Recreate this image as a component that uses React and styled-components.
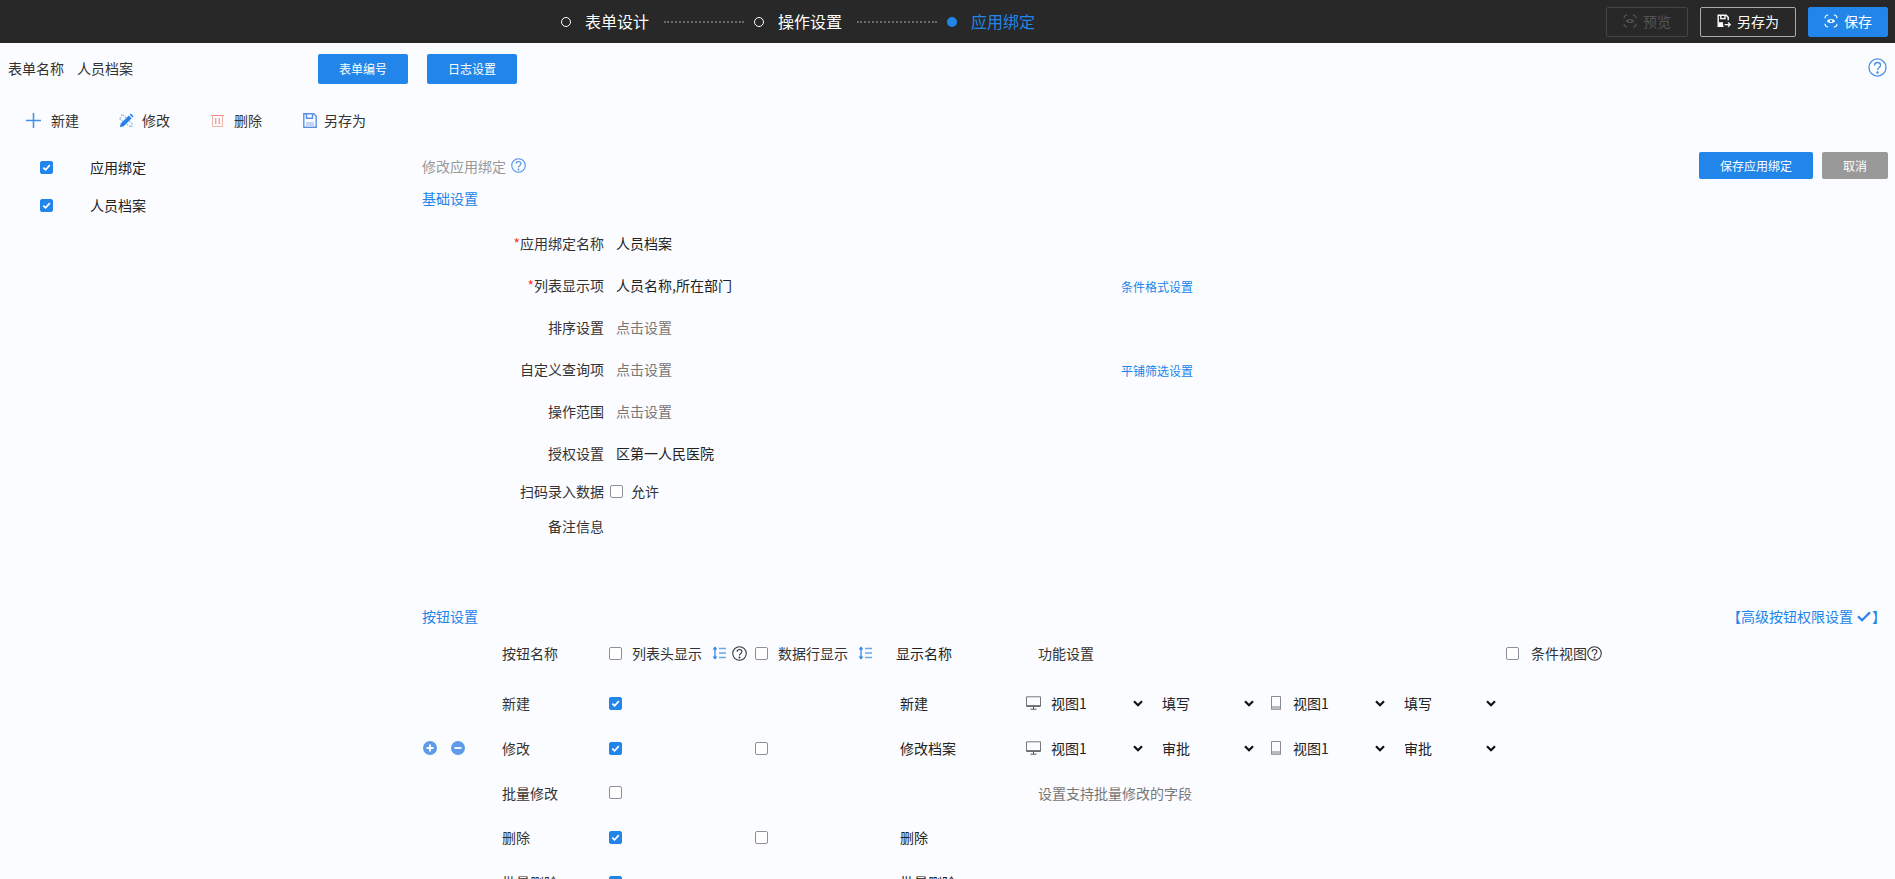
import React from "react";
import styled, { createGlobalStyle } from "styled-components";

const BLUE = "#2185e9";

const Global = createGlobalStyle`
  html, body { margin: 0; padding: 0; height: 100%; overflow: hidden; background: #fbfcff; }
  body { font-family: "Noto Sans CJK SC", "Noto Sans", sans-serif; font-size: 14px; color: #333; }
  * { box-sizing: border-box; }
`;

const Page = styled.div`
  height: 100vh;
  overflow: hidden;
  display: flex;
  flex-direction: column;
`;

const TopBar = styled.header`
  flex: none;
  height: 43px;
  background: #282828;
  display: flex;
  align-items: center;
  padding: 0 7px 0 561px;
`;
const Steps = styled.div`
  display: flex;
  align-items: center;
`;
const StepDot = styled.span`
  width: 10px;
  height: 10px;
  border-radius: 50%;
  border: ${(p) => (p.$active ? "none" : "1.5px solid #fff")};
  background: ${(p) => (p.$active ? BLUE : "transparent")};
  margin-right: 14px;
`;
const StepText = styled.span`
  font-size: 16px;
  line-height: 24px;
  margin-bottom: 2px;
  color: ${(p) => (p.$active ? BLUE : "#fff")};
`;
const StepLine = styled.span`
  width: 80px;
  border-top: 2px dotted #6a6a6a;
  margin: 1px 10px 0 15px;
`;
const TopActions = styled.div`
  margin-left: auto;
  display: flex;
  gap: 12px;
`;
const TopButton = styled.button`
  width: ${(p) => p.$w}px;
  height: 30px;
  display: flex;
  align-items: center;
  justify-content: center;
  gap: 6px;
  padding: 0 0 1px;
  border-radius: 2px;
  font: inherit;
  font-size: 14px;
  color: ${(p) => (p.$variant === "disabled" ? "#555" : "#fff")};
  background: ${(p) => (p.$variant === "primary" ? BLUE : "transparent")};
  border: 1px solid
    ${(p) =>
      p.$variant === "primary" ? BLUE : p.$variant === "disabled" ? "#444" : "#aaa"};
`;

const FormBar = styled.div`
  flex: none;
  height: 30px;
  margin-top: 11px;
  padding: 0 8px;
  display: flex;
  align-items: center;
`;
const FormName = styled.span`
  font-size: 14px;
  line-height: 20px;
  color: #333;
  margin: 0 ${(p) => p.$mr || 0}px 2px 0;
`;
const BlueButton = styled.button`
  width: ${(p) => p.$w}px;
  height: ${(p) => p.$h}px;
  padding: 0 0 1px;
  border: none;
  border-radius: 2px;
  background: ${(p) => (p.$grey ? "#999" : BLUE)};
  color: #fff;
  font: inherit;
  font-size: 12px;
  margin-right: ${(p) => p.$mr || 0}px;
`;
const HelpCorner = styled.span`
  margin-left: auto;
  margin-top: -3px;
  display: flex;
`;

const Toolbar = styled.div`
  flex: none;
  height: 28px;
  margin-top: 22px;
  padding-left: 26px;
  display: flex;
  align-items: center;
  gap: 40px;
`;
const ToolItem = styled.span`
  display: flex;
  align-items: center;
  gap: ${(p) => p.$gap}px;
  font-size: 14px;
  color: #333;
`;
const ToolIcon = styled.span`
  width: 15px;
  height: 15px;
  display: flex;
  align-items: center;
  justify-content: center;
`;

const Body = styled.div`
  flex: 1;
  display: grid;
  grid-template-columns: 422px 1fr;
  min-height: 0;
`;
const SideList = styled.div`
  padding: 14px 0 0 40px;
`;
const SideRow = styled.div`
  height: 38px;
  display: flex;
  align-items: center;
  gap: 37px;
  font-size: 14px;
  color: #222;
`;

const Box = styled.span`
  flex: none;
  width: 13px;
  height: 13px;
  border-radius: 2px;
  display: inline-flex;
  align-items: center;
  justify-content: center;
  background: ${(p) => (p.$on ? BLUE : "#fff")};
  border: 1px solid ${(p) => (p.$on ? BLUE : "#8f8f99")};
`;

const Panel = styled.div`
  padding: 18px 7px 0 0;
  min-width: 0;
`;
const PanelHead = styled.div`
  height: 27px;
  display: flex;
  align-items: center;
`;
const PanelTitle = styled.span`
  font-size: 14px;
  color: #999;
  margin-right: 5px;
`;
const PanelButtons = styled.div`
  margin-left: auto;
  display: flex;
  gap: 9px;
`;
const SectionTitle = styled.div`
  font-size: 14px;
  line-height: 20px;
  color: ${BLUE};
  margin-top: ${(p) => p.$mt}px;
`;
const FormRows = styled.div`
  margin-top: 14px;
`;
const FormRow = styled.div`
  height: ${(p) => p.$h || 42}px;
  display: grid;
  grid-template-columns: 182px 505px auto;
  column-gap: 6px;
  align-items: center;
`;
const Label = styled.span`
  text-align: right;
  font-size: 14px;
  color: #333;
`;
const Star = styled.i`
  font-style: normal;
  color: #f33;
`;
const Value = styled.span`
  padding-left: 6px;
  font-size: 14px;
  color: ${(p) => (p.$muted ? "#777" : "#222")};
`;
const CheckValue = styled.span`
  display: flex;
  align-items: center;
  gap: 8px;
  font-size: 14px;
  color: #333;
`;
const LinkText = styled.span`
  font-size: 12px;
  padding-top: 2px;
  color: ${BLUE};
`;

const ButtonHead = styled.div`
  margin-top: 62px;
  height: 20px;
  display: flex;
  align-items: center;
  justify-content: space-between;
  padding-right: 2px;
`;
const AdvancedLink = styled.span`
  display: flex;
  align-items: center;
  font-size: 14px;
  color: ${BLUE};
`;
const CheckWrap = styled.span`
  display: flex;
  margin: 0 1px 0 4px;
`;
const Grid = styled.div`
  margin-top: ${(p) => p.$mt || 0}px;
  height: ${(p) => p.$h || 44.7}px;
  display: grid;
  grid-template-columns: 80px 107px 146px 141px 130px 480px 1fr;
  align-items: center;
  font-size: 14px;
  color: #333;
`;
const Ops = styled.span`
  display: flex;
  gap: 14px;
  padding-left: 1px;
`;
const BoxCell = styled.span`
  display: flex;
`;
const Inline = styled.span`
  display: flex;
  align-items: center;
  gap: ${(p) => p.$gap || 0}px;
  margin-left: ${(p) => p.$ml || 0}px;
`;
const HeadCheck = styled.span`
  display: flex;
  align-items: center;
  gap: ${(p) => p.$gap || 10}px;
`;
const DisplayName = styled.span`
  padding-left: ${(p) => (p.$head ? 0 : 4)}px;
  color: #222;
`;
const Func = styled.span`
  display: flex;
  align-items: center;
`;
const FuncHead = styled.span`
  padding-left: 12px;
`;
const FuncNote = styled.span`
  padding-left: 12px;
  color: #777;
`;
const DeviceIcon = styled.span`
  width: ${(p) => p.$w}px;
  margin-right: ${(p) => p.$mr}px;
  display: flex;
  justify-content: center;
`;
const Select = styled.span`
  width: 92px;
  margin-right: ${(p) => p.$mr || 0}px;
  display: flex;
  align-items: center;
  justify-content: space-between;
  color: #222;
`;

const Check = () => (
  <svg width="9" height="9" viewBox="0 0 9 9" fill="none" stroke="#fff" strokeWidth="1.8">
    <path d="M1.3 4.6 3.6 6.8 7.8 2.2" />
  </svg>
);
const CheckBox = ({ on }) => <Box $on={on}>{on && <Check />}</Box>;

const Help = ({ size = 15, color = "#4a90e2" }) => (
  <svg width={size} height={size} viewBox="0 0 20 20" fill="none" stroke={color} strokeWidth="1.4">
    <circle cx="10" cy="10" r="9" />
    <path d="M6.8 7.8c0-1.9 1.4-3.1 3.2-3.1s3.2 1.2 3.2 2.9c0 2.4-3.2 2.4-3.2 5" />
    <circle cx="10" cy="15.2" r=".6" fill={color} />
  </svg>
);

const Eye = ({ color = "#fff" }) => (
  <svg width="14" height="14" viewBox="0 0 14 14" fill="none" stroke={color} strokeWidth="1.2">
    <path d="M1 4.2C1 2.4 2.4 1 4.2 1M9.8 1C11.6 1 13 2.4 13 4.2M13 9.8c0 1.8-1.4 3.2-3.2 3.2M4.2 13C2.4 13 1 11.6 1 9.8" />
    <path d="M2.8 7C4.6 4.2 9.4 4.2 11.2 7 9.4 9.8 4.6 9.8 2.8 7Z" fill={color} stroke="none" />
    <circle cx="7" cy="7" r="1.3" fill={color === "#fff" ? BLUE : "#282828"} stroke="none" />
  </svg>
);
const SaveAsIcon = () => (
  <svg width="14" height="14" viewBox="0 0 14 14" fill="none" stroke="#fff" strokeWidth="1.4">
    <path d="M6.5 12.3H1.2V1.2h8l2 2v3" />
    <path d="M3.8 1.2v3.4h4.2V1.2" />
    <path d="M2 8.2h4v4H2Z" fill="#fff" stroke="none" />
    <path d="M7.6 10.6h5.4M11 8.4l2.2 2.2L11 12.8" strokeWidth="1.2" />
  </svg>
);
const Plus = () => (
  <svg width="15" height="15" viewBox="0 0 15 15" stroke="#3f8ee8" strokeWidth="1.5">
    <path d="M7.5 0v15M0 7.5h15" />
  </svg>
);
const Pencil = () => (
  <svg width="15" height="15" viewBox="0 0 15 15" fill="none">
    <path d="M1 6 3.2 1l10.4 10.2-1.6 3Z" fill="none" stroke="#a3c6f3" strokeWidth="1.4" strokeDasharray="2 1" />
    <path d="M.8 14.2 1.8 10.4 9.8 2.4l2.9 2.9-8 8Z" fill="#2a80ea" />
    <path d="M10.6 1.6 11.8.6l2.7 2.7-1 1.2Z" fill="#2a80ea" />
  </svg>
);
const Trash = () => (
  <svg width="13" height="13" viewBox="0 0 13 13" fill="none" stroke="#ef8a78" strokeWidth="1">
    <path d="M0 1.5h13" />
    <path d="M1.5 1.5v11h10v-11" stroke="#f0b3a8" />
    <path d="M4.8 4v6M8.2 4v6" stroke="#ea7d6b" />
  </svg>
);
const Floppy = () => (
  <svg width="14" height="15" viewBox="0 0 14 15" fill="none" stroke="#5b8fe6" strokeWidth="1.4">
    <path d="M.8.8h10l2.4 2.4v11H.8Z" />
    <path d="M3.5.8v4.4h6V.8" />
    <path d="M3 9h8v5H3Z" fill="#c3d5f6" stroke="none" />
  </svg>
);
const Sort = () => (
  <svg width="14" height="14" viewBox="0 0 14 14" fill="none" stroke="#2f86e8" strokeWidth="1.3">
    <path d="M3 1v12" />
    <path d="M.6 3.6 3 .6l2.4 3ZM.6 10.4 3 13.4l2.4-3Z" fill="#2f86e8" stroke="none" />
    <path d="M7 2.5h7M7 7h7M7 11.5h7" stroke="#6aa8ec" />
  </svg>
);
const Round = ({ plus }) => (
  <svg width="14" height="14" viewBox="0 0 14 14">
    <circle cx="7" cy="7" r="7" fill="#5d9be8" />
    <path d={plus ? "M3.5 7h7M7 3.5v7" : "M3.5 7h7"} stroke="#fff" strokeWidth="1.8" />
  </svg>
);
const Chevron = () => (
  <svg width="10" height="7" viewBox="0 0 10 7" fill="none" stroke="#111" strokeWidth="2.2">
    <path d="M1 1.2 5 5.2l4-4" />
  </svg>
);
const Desktop = () => (
  <svg width="15" height="14" viewBox="0 0 15 14" fill="none" stroke="#777" strokeWidth="1">
    <path d="M.5 .8h14v9.4H.5Z" />
    <path d="M.5 10h14" stroke="#555" strokeWidth="1.4" />
    <path d="M7.5 10.5v2.5M4.5 13.2h6" stroke="#555" />
  </svg>
);
const Phone = () => (
  <svg width="10" height="14" viewBox="0 0 10 14" fill="none" stroke="#8a8a94" strokeWidth="1">
    <path d="M.5 .5h9v13h-9Z" />
    <path d="M1 10h8v3.5H1Z" fill="#bbb" stroke="none" />
  </svg>
);
const CheckMark = () => (
  <svg width="14" height="11" viewBox="0 0 14 11" fill="none" stroke="#2f83ea" strokeWidth="2.2">
    <path d="M1 5.4 5 9.2 13 1.4" />
  </svg>
);

const FuncCells = ({ a, b }) => (
  <Func>
    <DeviceIcon $w={15} $mr={10}><Desktop /></DeviceIcon>
    <Select $mr={19}>{a}<Chevron /></Select>
    <Select $mr={17}>{b}<Chevron /></Select>
    <DeviceIcon $w={10} $mr={12}><Phone /></DeviceIcon>
    <Select $mr={19}>{a}<Chevron /></Select>
    <Select>{b}<Chevron /></Select>
  </Func>
);

const rows = [
  { name: "新建", list: true, display: "新建", func: ["视图1", "填写"] },
  { name: "修改", list: true, data: false, ops: true, display: "修改档案", func: ["视图1", "审批"] },
  { name: "批量修改", list: false, note: "设置支持批量修改的字段" },
  { name: "删除", list: true, data: false, display: "删除" },
  { name: "批量删除", list: true, display: "批量删除" },
];

export default function App() {
  return (
    <Page>
      <Global />
      <TopBar>
        <Steps>
          <StepDot /><StepText>表单设计</StepText><StepLine />
          <StepDot /><StepText>操作设置</StepText><StepLine />
          <StepDot $active /><StepText $active>应用绑定</StepText>
        </Steps>
        <TopActions>
          <TopButton $w={82} $variant="disabled"><Eye color="#555" />预览</TopButton>
          <TopButton $w={96}><SaveAsIcon />另存为</TopButton>
          <TopButton $w={80} $variant="primary"><Eye />保存</TopButton>
        </TopActions>
      </TopBar>

      <FormBar>
        <FormName $mr={13}>表单名称</FormName>
        <FormName $mr={185}>人员档案</FormName>
        <BlueButton $w={90} $h={30} $mr={19}>表单编号</BlueButton>
        <BlueButton $w={90} $h={30}>日志设置</BlueButton>
        <HelpCorner><Help size={19} /></HelpCorner>
      </FormBar>

      <Toolbar>
        <ToolItem $gap={10}><ToolIcon><Plus /></ToolIcon>新建</ToolItem>
        <ToolItem $gap={8}><ToolIcon><Pencil /></ToolIcon>修改</ToolItem>
        <ToolItem $gap={9}><ToolIcon><Trash /></ToolIcon>删除</ToolItem>
        <ToolItem $gap={7}><ToolIcon><Floppy /></ToolIcon>另存为</ToolItem>
      </Toolbar>

      <Body>
        <SideList>
          <SideRow><CheckBox on />应用绑定</SideRow>
          <SideRow><CheckBox on />人员档案</SideRow>
        </SideList>

        <Panel>
          <PanelHead>
            <PanelTitle>修改应用绑定</PanelTitle>
            <Help size={15} />
            <PanelButtons>
              <BlueButton $w={114} $h={27}>保存应用绑定</BlueButton>
              <BlueButton $w={66} $h={27} $grey>取消</BlueButton>
            </PanelButtons>
          </PanelHead>
          <SectionTitle $mt={9}>基础设置</SectionTitle>
          <FormRows>
            <FormRow><Label><Star>*</Star>应用绑定名称</Label><Value>人员档案</Value></FormRow>
            <FormRow>
              <Label><Star>*</Star>列表显示项</Label>
              <Value>人员名称,所在部门</Value>
              <LinkText>条件格式设置</LinkText>
            </FormRow>
            <FormRow><Label>排序设置</Label><Value $muted>点击设置</Value></FormRow>
            <FormRow>
              <Label>自定义查询项</Label>
              <Value $muted>点击设置</Value>
              <LinkText>平铺筛选设置</LinkText>
            </FormRow>
            <FormRow><Label>操作范围</Label><Value $muted>点击设置</Value></FormRow>
            <FormRow><Label>授权设置</Label><Value>区第一人民医院</Value></FormRow>
            <FormRow $h={34}>
              <Label>扫码录入数据</Label>
              <CheckValue><CheckBox />允许</CheckValue>
            </FormRow>
            <FormRow $h={36}><Label>备注信息</Label></FormRow>
          </FormRows>

          <ButtonHead>
            <SectionTitle>按钮设置</SectionTitle>
            <AdvancedLink>【高级按钮权限设置<CheckWrap><CheckMark /></CheckWrap>】</AdvancedLink>
          </ButtonHead>

          <Grid $mt={5} $h={44}>
            <span />
            <span>按钮名称</span>
            <Inline>
              <HeadCheck><CheckBox />列表头显示</HeadCheck>
              <Inline $gap={6} $ml={10}><Sort /><Help size={15} color="#333" /></Inline>
            </Inline>
            <Inline>
              <HeadCheck><CheckBox />数据行显示</HeadCheck>
              <Inline $ml={10}><Sort /></Inline>
            </Inline>
            <DisplayName $head>显示名称</DisplayName>
            <FuncHead>功能设置</FuncHead>
            <Inline>
              <HeadCheck $gap={12}><CheckBox />条件视图</HeadCheck>
              <Help size={15} color="#333" />
            </Inline>
          </Grid>

          {rows.map((r, i) => (
            <Grid key={r.name} $mt={i === 0 ? 6 : 0}>
              {r.ops ? <Ops><Round plus /><Round /></Ops> : <span />}
              <span>{r.name}</span>
              <BoxCell><CheckBox on={r.list} /></BoxCell>
              {r.data === undefined ? <span /> : <BoxCell><CheckBox on={r.data} /></BoxCell>}
              <DisplayName>{r.display}</DisplayName>
              {r.func ? <FuncCells a={r.func[0]} b={r.func[1]} /> : r.note ? <FuncNote>{r.note}</FuncNote> : <span />}
            </Grid>
          ))}
        </Panel>
      </Body>
    </Page>
  );
}
